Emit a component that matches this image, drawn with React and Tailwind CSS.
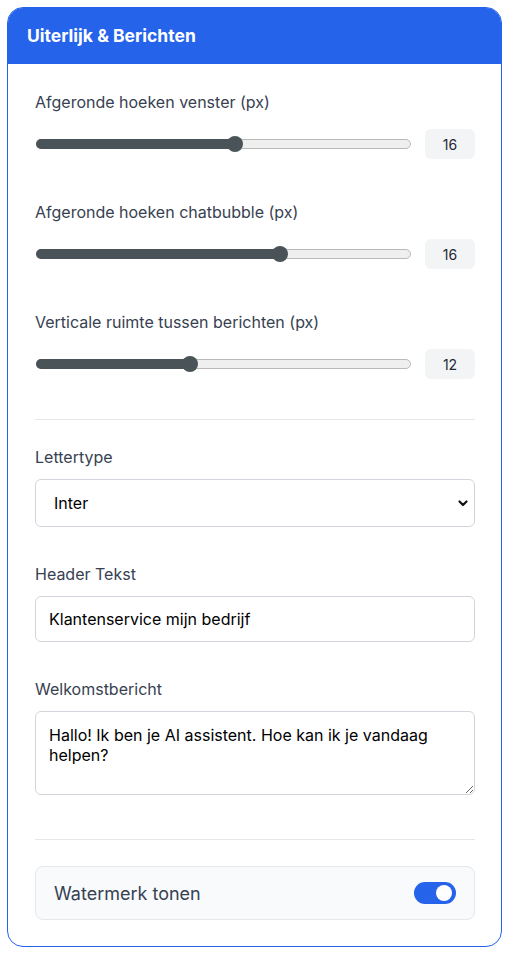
import React from 'react';

const sliders = [
  { label: 'Afgeronde hoeken venster (px)', value: 16, pct: 0.532 },
  { label: 'Afgeronde hoeken chatbubble (px)', value: 16, pct: 0.657 },
  { label: 'Verticale ruimte tussen berichten (px)', value: 12, pct: 0.407 },
];

function Slider({ label, value, pct }) {
  return (
    <div>
      <div className="text-[16px] leading-[22px] text-[#374151]">{label}</div>
      <div className="mt-4 flex items-center gap-[14px]">
        <div className="relative h-[30px] flex-1">
          <div className="absolute left-px right-0 top-[10px] h-[10px] rounded-full border border-[#b9b9b9] bg-[#efefef]" />
          <div
            className="absolute left-px top-[10px] h-[10px] rounded-full bg-[#4a5357]"
            style={{ width: `calc(8px + (100% - 17px) * ${pct})` }}
          />
          <div
            className="absolute top-[7px] h-4 w-4 rounded-full bg-[#4a5357]"
            style={{ left: `calc(1px + (100% - 17px) * ${pct})` }}
          />
        </div>
        <div className="flex h-[30px] w-[50px] items-center justify-center rounded-md bg-[#f3f4f6] text-[14px] text-[#1f2937]">
          {value}
        </div>
      </div>
    </div>
  );
}

export default function App() {
  return (
    <div className="min-h-[959px] bg-white pt-[7px] pl-[7px]" style={{ fontFamily: 'Inter, "Noto Sans", sans-serif' }}>
      <div className="w-[495px] overflow-hidden rounded-2xl border border-[#2563eb] bg-white">
        <div className="flex h-[56px] items-center bg-[#2563eb] px-[19px]">
          <h3 className="text-[17.5px] font-bold text-white">Uiterlijk &amp; Berichten</h3>
        </div>
        <div className="pl-[27px] pr-[26px] pt-[27px] pb-[26px]">
          <div className="flex flex-col gap-[42px]">
            {sliders.map((s) => (
              <Slider key={s.label} {...s} />
            ))}
          </div>

          <div className="mt-[40px] border-t border-[#e5e7eb]" />

          <div className="mt-[26px] text-[16px] leading-[22px] text-[#374151]">Lettertype</div>
          <div className="mt-[11px] flex h-[48px] items-center justify-between rounded-md border border-[#d1d5db] pl-[18px] pr-[5px] text-[16px] text-black">
            <span>Inter</span>
            <svg width="12" height="12" viewBox="0 0 12 12" fill="none">
              <path d="M2.5 4.5 6 8l3.5-3.5" stroke="#111" strokeWidth="2.2" strokeLinecap="round" strokeLinejoin="round" />
            </svg>
          </div>

          <div className="mt-[36px] text-[16px] leading-[22px] text-[#374151]">Header Tekst</div>
          <div className="mt-[11px] flex h-[46px] items-center rounded-md border border-[#d1d5db] px-[13px] text-[16px] text-black">
            Klantenservice mijn bedrijf
          </div>

          <div className="mt-[36px] text-[16px] leading-[22px] text-[#374151]">Welkomstbericht</div>
          <textarea
            readOnly
            className="mt-[11px] block h-[84px] w-full rounded-md border border-[#d1d5db] px-[13px] py-[13px] text-[16px] leading-[20px] text-black outline-none"
            defaultValue="Hallo! Ik ben je AI assistent. Hoe kan ik je vandaag helpen?"
          />

          <div className="mt-[44px] border-t border-[#e5e7eb]" />

          <div className="mt-[26px] flex h-[54px] items-center justify-between rounded-lg border border-[#e5e7eb] bg-[#f8fafc] pl-[18px] pr-[18px]">
            <span className="text-[18px] text-[#374151]">Watermerk tonen</span>
            <div className="relative h-[22px] w-[42px] rounded-full bg-[#2563eb]">
              <div className="absolute right-[4px] top-[3px] h-4 w-4 rounded-full bg-white" />
            </div>
          </div>
        </div>
      </div>
    </div>
  );
}
